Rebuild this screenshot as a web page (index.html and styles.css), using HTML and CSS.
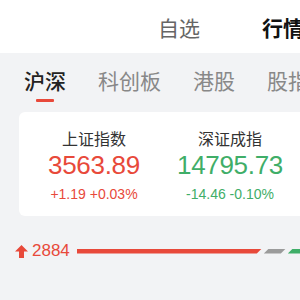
FILE: index.html
```html
<!DOCTYPE html>
<html lang="zh-CN">
<head>
    <meta charset="UTF-8">
    <meta name="viewport" content="width=device-width, initial-scale=1.0">
    <title>行情</title>
    <link rel="stylesheet" href="styles.css">
</head>
<body>
    <div class="page">
        <!-- 顶部导航 -->
        <div class="top-nav">
            <span class="top-item">自选</span>
            <span class="top-item active">行情</span>
        </div>

        <div class="main">
            <!-- 市场切换 -->
            <div class="market-tabs">
                <div class="market-tab active">沪深<i class="tab-line"></i></div>
                <div class="market-tab">科创板</div>
                <div class="market-tab">港股</div>
                <div class="market-tab">股指</div>
            </div>

            <!-- 指数卡片 -->
            <div class="index-card">
                <div class="index-item up">
                    <div class="index-name">上证指数</div>
                    <div class="index-price">3563.89</div>
                    <div class="index-change">+1.19 +0.03%</div>
                </div>
                <div class="index-item down">
                    <div class="index-name">深证成指</div>
                    <div class="index-price">14795.73</div>
                    <div class="index-change">-14.46 -0.10%</div>
                </div>
            </div>

            <!-- 涨跌分布 -->
            <div class="breadth">
                <span class="breadth-up">
                    <svg class="arrow" width="13" height="13" viewBox="0 0 13 13">
                        <path d="M6.5 0 L13 6.5 L9 6.5 L9 13 L4 13 L4 6.5 L0 6.5 Z" fill="#e8493a"/>
                    </svg>2884
                </span>
                <div class="breadth-bar">
                    <span class="seg seg-up" style="width: 185px"></span>
                    <span class="seg seg-flat" style="width: 22px"></span>
                    <span class="seg seg-down" style="width: 40px"></span>
                </div>
            </div>
        </div>
    </div>
</body>
</html>
```

FILE: styles.css
```css
* {
    box-sizing: border-box;
}

body {
    margin: 0;
    width: 300px;
    height: 300px;
    overflow: hidden;
    font-family: "Liberation Sans", "Noto Sans CJK SC", sans-serif;
    background-color: #f2f3f5;
}

.page {
    width: 300px;
}

.top-nav {
    height: 53px;
    background-color: white;
    display: flex;
    align-items: center;
    padding-left: 158px;
    gap: 62px;
    white-space: nowrap;
}

.top-item {
    font-family: "Noto Sans CJK SC", sans-serif;
    font-size: 21px;
    line-height: 28px;
    color: #666;
}

    .top-item.active {
        color: #111;
        font-weight: bold;
    }

.main {
    background-color: #f2f3f5;
}

.market-tabs {
    display: flex;
    gap: 32px;
    padding: 13px 0 0 24px;
    height: 59px;
    white-space: nowrap;
}

.market-tab {
    font-family: "Noto Sans CJK SC", sans-serif;
    font-size: 21px;
    line-height: 28px;
    color: #888;
}

    .market-tab.active {
        color: #222;
        font-weight: 500;
    }

.tab-line {
    display: block;
    width: 18px;
    height: 3px;
    margin: 5px auto 0;
    border-radius: 1px;
    background-color: #e8493a;
}

.index-card {
    display: flex;
    margin-left: 19px;
    width: 430px;
    padding: 15px 7px 12px;
    background-color: white;
    border-radius: 6px;
}

.index-item {
    width: 136px;
    flex: none;
    text-align: center;
}

.index-name {
    font-family: "Noto Sans CJK SC", sans-serif;
    font-size: 16px;
    line-height: 22px;
    color: #333;
}

.index-price {
    font-size: 26px;
    line-height: 32px;
    letter-spacing: -0.3px;
}

.index-change {
    margin-top: 3px;
    font-size: 14px;
    line-height: 20px;
}

.up {
    color: #e8493a;
}

.down {
    color: #3fae68;
}

.breadth {
    display: flex;
    align-items: center;
    height: 70px;
    padding-left: 15px;
    white-space: nowrap;
}

.breadth-up {
    display: flex;
    align-items: center;
    font-size: 17px;
    color: #e8493a;
}

.arrow {
    margin-right: 4px;
}

.breadth-bar {
    display: flex;
    gap: 2px;
    margin-left: 7px;
    height: 5px;
}

.seg {
    display: block;
    height: 5px;
    flex: none;
}

.seg-up {
    background-color: #e8493a;
    clip-path: polygon(0 0, 100% 0, calc(100% - 5px) 100%, 0 100%);
}

.seg-flat {
    background-color: #9b9b9b;
    clip-path: polygon(5px 0, 100% 0, calc(100% - 5px) 100%, 0 100%);
}

.seg-down {
    background-color: #3fae68;
    clip-path: polygon(5px 0, 100% 0, 100% 100%, 0 100%);
}
```
